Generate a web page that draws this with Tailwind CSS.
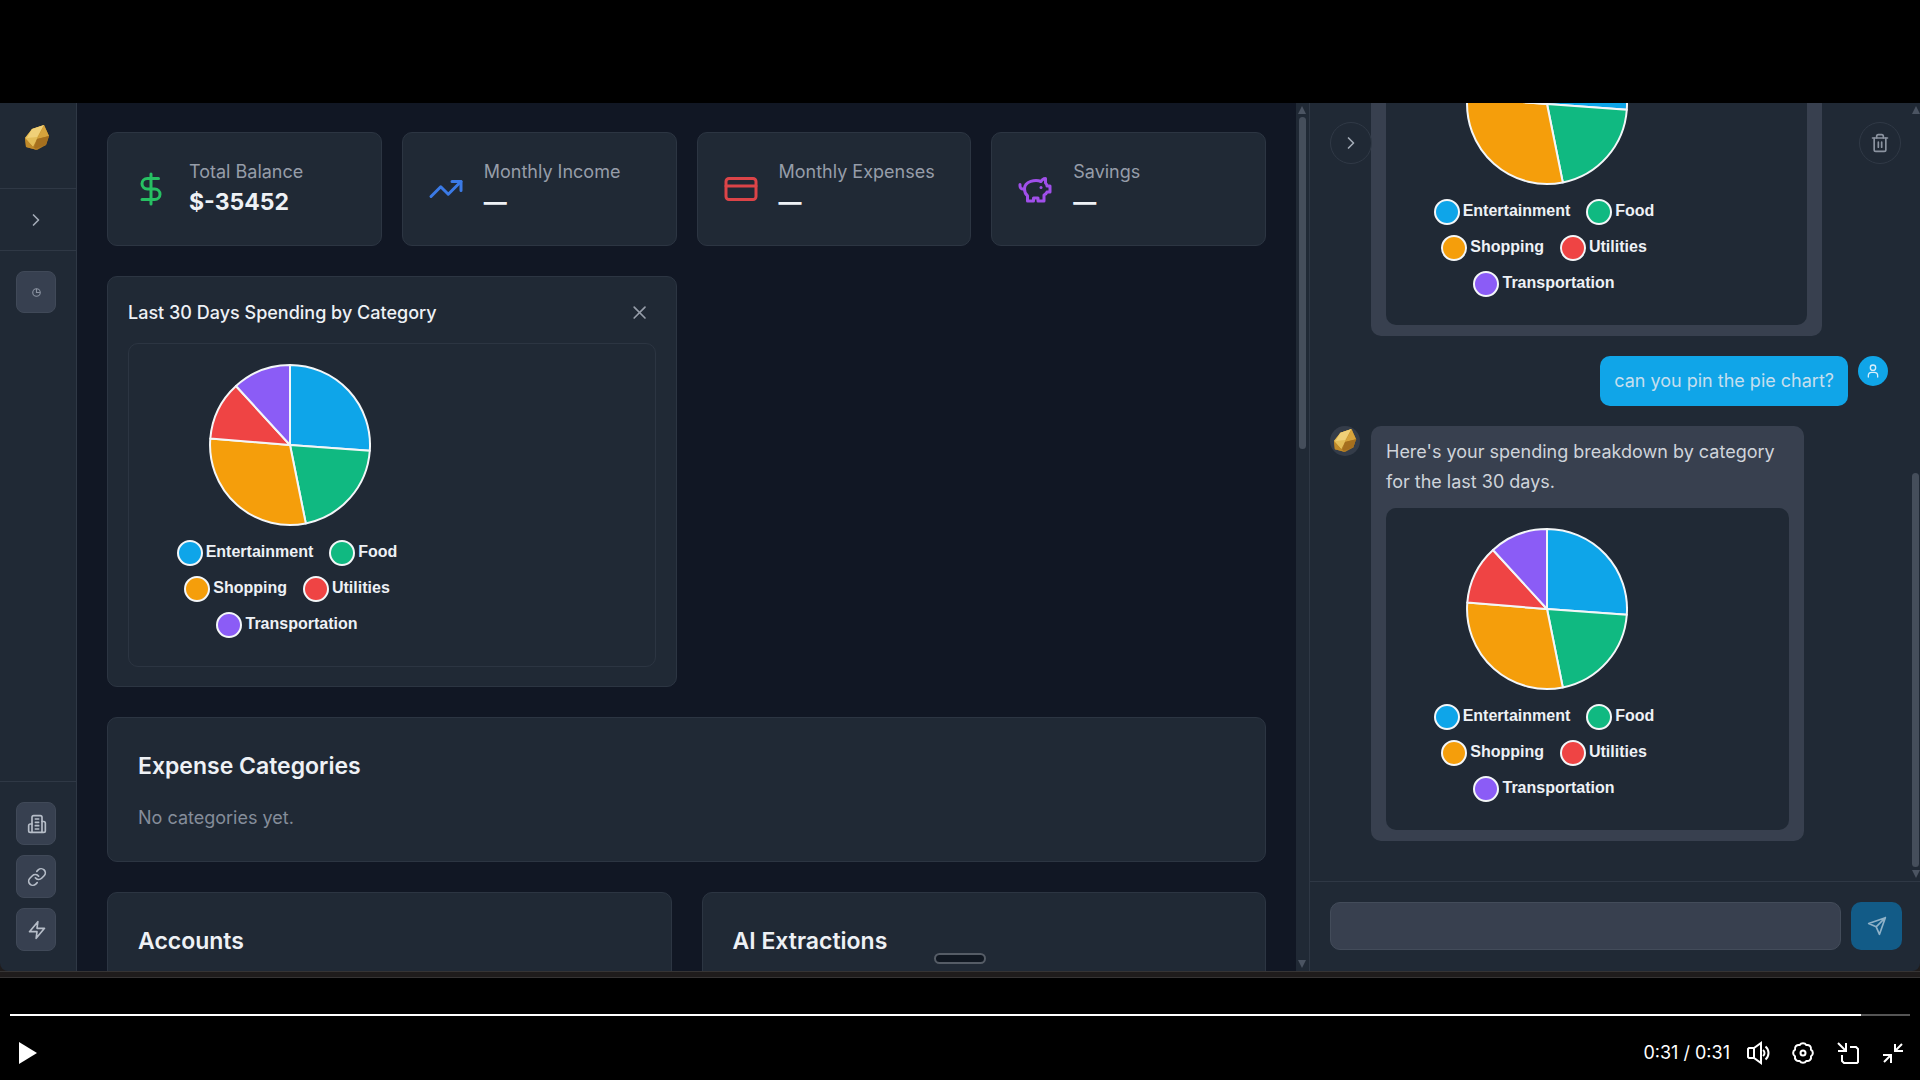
<!DOCTYPE html>
<html lang="en">
  <head>
    <meta charset="UTF-8" />
    <meta name="viewport" content="width=device-width, initial-scale=1.0" />
    <title>Finance dashboard demo</title>
    <script src="https://cdn.jsdelivr.net/npm/@tailwindcss/browser@4"></script>
  </head>
  <body
    class="bg-black h-screen flex flex-col overflow-hidden pt-[103px] font-['Inter',sans-serif] text-lg text-[#eef1f5]"
  >
    <!-- Shared icons -->
    <svg class="hidden">
      <symbol id="nugget" viewBox="0 0 26 26">
        <polygon points="1,13 8,4 20,0 25,11 22,20 13,25 2,22" fill="#b07a22" />
        <polygon points="1,13 8,4 20,0 13,14 9,22" fill="#e3bd58" />
        <polygon points="8,4 20,0 13,12 3,13" fill="#f0d078" />
        <polygon points="20,0 25,11 13,14" fill="#d6a33c" />
        <polygon points="13,14 25,11 22,20 10,24" fill="#a56f1e" />
        <polygon points="1,13 9,22 13,25 2,22" fill="#c08a2a" />
      </symbol>
    </svg>

    <div class="relative flex-1 min-h-0 flex bg-[#1f1c1c]">
      <!-- Sidebar -->
      <aside
        class="w-[77px] shrink-0 bg-[#202935] border-r border-[#2f3845] flex flex-col rounded-bl-lg"
      >
        <div class="h-[86px] border-b border-[#2f3845] pl-6 pt-[22px]">
          <svg class="w-[26px] h-[26px]"><use href="#nugget" /></svg>
        </div>
        <div class="h-[62px] border-b border-[#2f3845] pl-[26px] flex items-center">
          <button type="button" aria-label="Expand sidebar" class="text-[#a3abb7]">
            <svg class="w-5 h-5" viewBox="0 0 24 24" fill="none" stroke="currentColor" stroke-width="2" stroke-linecap="round" stroke-linejoin="round"><path d="m9 18 6-6-6-6" /></svg>
          </button>
        </div>
        <div class="flex-1 pl-4 pt-5">
          <button
            type="button"
            aria-label="Charts"
            class="w-10 h-[42px] rounded-lg bg-[#374050] border border-[#404958] flex items-center justify-center text-[#8b93a1]"
          >
            <svg class="w-[9px] h-[9px]" viewBox="0 0 24 24" fill="none" stroke="currentColor" stroke-width="3"><circle cx="12" cy="12" r="10" /><path d="M12 2v10h9" /></svg>
          </button>
        </div>
        <div class="border-t border-[#2f3845] pl-4 pt-5 pb-5 flex flex-col gap-[10px] text-[#b6bdc8]">
          <button type="button" aria-label="Institutions" class="w-10 h-[43px] rounded-lg bg-[#374050] border border-[#404958] flex items-center justify-center pl-[2px]">
            <svg class="w-5 h-5" viewBox="0 0 24 24" fill="none" stroke="currentColor" stroke-width="2" stroke-linecap="round" stroke-linejoin="round"><path d="M6 22V4a2 2 0 0 1 2-2h8a2 2 0 0 1 2 2v18Z" /><path d="M6 12H4a2 2 0 0 0-2 2v6a2 2 0 0 0 2 2h2" /><path d="M18 9h2a2 2 0 0 1 2 2v9a2 2 0 0 1-2 2h-2" /><path d="M10 6h4M10 10h4M10 14h4M10 18h4" /></svg>
          </button>
          <button type="button" aria-label="Links" class="w-10 h-[43px] rounded-lg bg-[#374050] border border-[#404958] flex items-center justify-center pl-[2px]">
            <svg class="w-5 h-5" viewBox="0 0 24 24" fill="none" stroke="currentColor" stroke-width="2" stroke-linecap="round" stroke-linejoin="round"><path d="M10 13a5 5 0 0 0 7.54.54l3-3a5 5 0 0 0-7.07-7.07l-1.72 1.71" /><path d="M14 11a5 5 0 0 0-7.54-.54l-3 3a5 5 0 0 0 7.07 7.07l1.71-1.71" /></svg>
          </button>
          <button type="button" aria-label="Automations" class="w-10 h-[43px] rounded-lg bg-[#374050] border border-[#404958] flex items-center justify-center pl-[2px]">
            <svg class="w-5 h-5" viewBox="0 0 24 24" fill="none" stroke="currentColor" stroke-width="2" stroke-linecap="round" stroke-linejoin="round"><polygon points="13 2 3 14 12 14 11 22 21 10 12 10 13 2" /></svg>
          </button>
        </div>
      </aside>

      <!-- Dashboard -->
      <main class="flex-1 min-w-0 overflow-hidden bg-[#111724] px-[30px] pt-[29px] flex flex-col gap-[30px]">
        <section class="grid grid-cols-4 gap-5 shrink-0">
          <div class="h-[114px] rounded-[10px] bg-[#202935] border border-[#2c3542] px-[25px] flex items-center gap-5">
            <svg class="w-9 h-9 shrink-0 text-[#27c063]" viewBox="0 0 24 24" fill="none" stroke="currentColor" stroke-width="2" stroke-linecap="round" stroke-linejoin="round"><path d="M12 2v20" /><path d="M17 5H9.500a3.500 3.500 0 0 0 0 7h5a3.500 3.500 0 0 1 0 7H6" /></svg>
            <div class="pb-[2px]">
              <p class="leading-7 text-[#969da9]">Total Balance</p>
              <p class="text-[23px] leading-8 font-bold">$-35452</p>
            </div>
          </div>
          <div class="h-[114px] rounded-[10px] bg-[#202935] border border-[#2c3542] px-[25px] flex items-center gap-5">
            <svg class="w-9 h-9 shrink-0 text-[#3b7ae6]" viewBox="0 0 24 24" fill="none" stroke="currentColor" stroke-width="2" stroke-linecap="round" stroke-linejoin="round"><path d="m22 7-8.500 8.500-5-5L2 17" /><path d="M16 7h6v6" /></svg>
            <div class="pb-[2px]">
              <p class="leading-7 text-[#969da9]">Monthly Income</p>
              <p class="text-[23px] leading-8 font-bold">—</p>
            </div>
          </div>
          <div class="h-[114px] rounded-[10px] bg-[#202935] border border-[#2c3542] px-[25px] flex items-center gap-5">
            <svg class="w-9 h-9 shrink-0 text-[#dc4448]" viewBox="0 0 24 24" fill="none" stroke="currentColor" stroke-width="2" stroke-linecap="round" stroke-linejoin="round"><rect width="20" height="14" x="2" y="5" rx="2" /><path d="M2 10h20" /></svg>
            <div class="pb-[2px]">
              <p class="leading-7 text-[#969da9]">Monthly Expenses</p>
              <p class="text-[23px] leading-8 font-bold">—</p>
            </div>
          </div>
          <div class="h-[114px] rounded-[10px] bg-[#202935] border border-[#2c3542] px-[25px] flex items-center gap-5">
            <svg class="w-9 h-9 shrink-0 text-[#a04fea]" viewBox="0 0 24 24" fill="none" stroke="currentColor" stroke-width="2" stroke-linecap="round" stroke-linejoin="round"><path d="M19 5c-1.500 0-2.800 1.400-3 2-3.500-1.500-11-.3-11 5 0 1.800 0 3 2 4.500V20h4v-2h3v2h4v-4c1-.5 1.700-1 2-2h2v-4h-2c0-1-.5-1.500-1-2V5z" /><path d="M2 9v1c0 1.100.9 2 2 2h1" /><path d="M16 11h.01" /></svg>
            <div class="pb-[2px]">
              <p class="leading-7 text-[#969da9]">Savings</p>
              <p class="text-[23px] leading-8 font-bold">—</p>
            </div>
          </div>
        </section>

        <section class="grid grid-cols-2 gap-5 shrink-0">
          <div class="rounded-[10px] bg-[#202935] border border-[#2c3542] px-5 pt-5 pb-[19px]">
            <div class="flex items-center justify-between h-8 mb-[14px]">
              <h3 class="font-medium">Last 30 Days Spending by Category</h3>
              <button type="button" aria-label="Unpin chart" class="pr-[6px] text-[#969da9]">
                <svg class="w-5 h-5" viewBox="0 0 24 24" fill="none" stroke="currentColor" stroke-width="2" stroke-linecap="round"><path d="M18 5 5 18M5 5l13 13" /></svg>
              </button>
            </div>
            <div data-chart class="rounded-[10px] border border-[#2c3542]"></div>
          </div>
        </section>

        <section class="shrink-0 rounded-[10px] bg-[#202935] border border-[#2c3542] p-[30px]">
          <h2 class="text-[23px] leading-9 font-semibold">Expense Categories</h2>
          <p class="mt-5 leading-[27px] text-[#858d9a]">No categories yet.</p>
        </section>

        <section class="grid grid-cols-2 gap-[30px] shrink-0">
          <div class="h-[200px] rounded-[10px] bg-[#202935] border border-[#2c3542] p-[30px]">
            <h2 class="text-[23px] leading-9 font-semibold">Accounts</h2>
          </div>
          <div class="h-[200px] rounded-[10px] bg-[#202935] border border-[#2c3542] p-[30px]">
            <h2 class="text-[23px] leading-9 font-semibold">AI Extractions</h2>
          </div>
        </section>
      </main>

      <!-- Dashboard scrollbar -->
      <div class="w-[13px] shrink-0 bg-[#202935] flex flex-col items-center py-[3px] pr-px text-[#4b5462]">
        <svg class="w-2 h-2 shrink-0" viewBox="0 0 8 8" fill="currentColor"><path d="M4 0 8 8H0z" /></svg>
        <div class="mt-[3px] w-[7px] h-[38.5%] rounded-full bg-[#454e5b]"></div>
        <svg class="mt-auto w-2 h-2 shrink-0" viewBox="0 0 8 8" fill="currentColor"><path d="M0 0h8L4 8z" /></svg>
      </div>

      <!-- Chat -->
      <aside class="relative w-[611px] shrink-0 bg-[#202935] border-l border-[#2f3845] flex flex-col rounded-br-lg">
        <div class="flex-1 min-h-0 flex">
          <div class="flex-1 min-w-0 overflow-hidden flex flex-col justify-end gap-5 pl-5 pr-[23px] pb-10">
            <div class="shrink-0 flex gap-[11px] pr-[66px]">
              <div class="w-[30px] shrink-0"></div>
              <div class="flex-1 rounded-[10px] bg-[#38404f] px-[15px] py-[11px]">
                <div data-chart class="rounded-[10px] bg-[#202935]"></div>
              </div>
            </div>

            <div class="shrink-0 flex justify-end gap-[10px]">
              <p class="rounded-[10px] bg-[#10a5e8] px-[14px] py-[10px] leading-[30px] text-[#c5dfee]">
                can you pin the pie chart?
              </p>
              <div class="w-[30px] h-[30px] shrink-0 rounded-full bg-[#10a5e8] flex items-center justify-center text-[#d8eefa]">
                <svg class="w-4 h-4" viewBox="0 0 24 24" fill="none" stroke="currentColor" stroke-width="2" stroke-linecap="round"><circle cx="12" cy="7" r="4" /><path d="M5 21v-2a5 5 0 0 1 5-5h4a5 5 0 0 1 5 5v2" /></svg>
              </div>
            </div>

            <div class="shrink-0 flex gap-[11px] pr-[84px]">
              <div class="w-[30px] h-[30px] shrink-0 rounded-full bg-[#343c49] flex items-center justify-center">
                <svg class="w-6 h-6"><use href="#nugget" /></svg>
              </div>
              <div class="flex-1 rounded-[10px] bg-[#38404f] px-[15px] py-[11px]">
                <p class="leading-[30px] text-[#cfd4db] mb-[11px]">
                  Here's your spending breakdown by category for the last 30 days.
                </p>
                <div data-chart class="rounded-[10px] bg-[#202935]"></div>
              </div>
            </div>
          </div>

          <!-- Chat scrollbar -->
          <div class="w-[9px] shrink-0 flex flex-col items-center py-[3px] text-[#4b5462]">
            <svg class="w-2 h-2 shrink-0" viewBox="0 0 8 8" fill="currentColor"><path d="M4 0 8 8H0z" /></svg>
            <div class="mt-auto mb-[3px] w-[7px] h-[51%] rounded-full bg-[#454e5b]"></div>
            <svg class="w-2 h-2 shrink-0" viewBox="0 0 8 8" fill="currentColor"><path d="M0 0h8L4 8z" /></svg>
          </div>
        </div>

        <form class="h-[90px] shrink-0 border-t border-[#2f3845] pl-5 pr-[18px] pt-5 flex gap-[10px]">
          <input
            type="text"
            aria-label="Message"
            class="flex-1 min-w-0 h-12 rounded-[10px] bg-[#38404f] border border-[#434c5a] px-4 focus:outline-none"
          />
          <button type="submit" aria-label="Send" class="w-[51px] h-12 rounded-[10px] bg-[#125b87] flex items-center justify-center text-[#8fb2c8]">
            <svg class="w-5 h-5" viewBox="0 0 24 24" fill="none" stroke="currentColor" stroke-width="2" stroke-linecap="round" stroke-linejoin="round"><path d="M22 2 15 22l-4-9-9-4ZM22 2 11 13" /></svg>
          </button>
        </form>

        <button type="button" aria-label="Collapse chat" class="absolute top-[19px] left-5 w-[42px] h-[42px] rounded-full bg-[#202935] border border-[#303946] flex items-center justify-center text-[#a3abb7]">
          <svg class="w-5 h-5" viewBox="0 0 24 24" fill="none" stroke="currentColor" stroke-width="2" stroke-linecap="round" stroke-linejoin="round"><path d="m9 18 6-6-6-6" /></svg>
        </button>
        <button type="button" aria-label="Clear chat" class="absolute top-[19px] right-[19px] w-[42px] h-[42px] rounded-full bg-[#202935] border border-[#303946] flex items-center justify-center text-[#8b93a0]">
          <svg class="w-5 h-5" viewBox="0 0 24 24" fill="none" stroke="currentColor" stroke-width="2" stroke-linecap="round" stroke-linejoin="round"><path d="M3 6h18" /><path d="M19 6v14a2 2 0 0 1-2 2H7a2 2 0 0 1-2-2V6" /><path d="M8 6V4a2 2 0 0 1 2-2h4a2 2 0 0 1 2 2v2" /><path d="M10 11v6M14 11v6" /></svg>
        </button>
      </aside>

      <div class="absolute bottom-[7px] left-1/2 -translate-x-1/2 w-[52px] h-[11px] rounded-full bg-[#101721] border-2 border-[#555c66]"></div>
    </div>

    <!-- Edge of the recorded window -->
    <div class="h-[7px] shrink-0 bg-[#1f1c1c] border-y border-[#363434]"></div>

    <!-- Player controls -->
    <footer class="h-[102px] shrink-0 bg-black text-white px-[10px] pt-9 flex flex-col">
      <input
        type="range"
        min="0"
        max="100"
        value="97"
        aria-label="Seek"
        class="block appearance-none w-full h-[2px] bg-[linear-gradient(to_right,#fff_97.4%,#555_97.4%)] [&::-webkit-slider-thumb]:appearance-none [&::-webkit-slider-thumb]:w-0"
      />
      <div class="mt-4 h-[42px] flex items-center">
        <button type="button" aria-label="Play" class="ml-[9px]">
          <svg class="w-[18px] h-[22px]" viewBox="0 0 18 22" fill="currentColor"><path d="M0 0 18 11 0 22z" /></svg>
        </button>
        <span class="ml-auto mr-4">0:31 / 0:31</span>
        <div class="flex items-center gap-[21px] pr-[5px]">
          <button type="button" aria-label="Mute">
            <svg class="w-6 h-6" viewBox="0 0 24 24" fill="none" stroke="currentColor" stroke-width="2"><path d="M15 2v20l-7-5H3l-1-1V8l1-1h5zM8 7v10" /><path d="M17 9c2 1.500 2 4.500 0 6M19.500 5.500c4 3.500 4 9.500 0 13" /></svg>
          </button>
          <button type="button" aria-label="Settings">
            <svg class="w-6 h-6" viewBox="0 0 24 24" fill="none" stroke="currentColor" stroke-width="2" stroke-linejoin="round"><path d="M19.950 8.710A3.800 3.800 0 0 1 19.950 15.290A3.800 3.800 0 0 1 15.290 19.950A3.800 3.800 0 0 1 8.710 19.950A3.800 3.800 0 0 1 4.050 15.290A3.800 3.800 0 0 1 4.050 8.710A3.800 3.800 0 0 1 8.710 4.050A3.800 3.800 0 0 1 15.290 4.050A3.800 3.800 0 0 1 19.950 8.710Z" /><circle cx="12" cy="12" r="2.500" /></svg>
          </button>
          <button type="button" aria-label="Picture in picture">
            <svg class="w-6 h-6" viewBox="0 0 24 24" fill="none" stroke="currentColor" stroke-width="2"><path d="m2 2 8 8M10 2v8H2" /><path d="M14 6h6l2 2v13l-1 1H8l-2-2v-6" /></svg>
          </button>
          <button type="button" aria-label="Exit full screen">
            <svg class="w-6 h-6" viewBox="0 0 24 24" fill="none" stroke="currentColor" stroke-width="2"><path d="m21 3-7 7M14 3v7h8M3 21l7-7M10 22v-8H2" /></svg>
          </button>
        </div>
      </div>
    </footer>

    <!-- Spending pie with its legend -->
    <template id="spendingChart">
      <div class="w-[280px] ml-[21px] pt-5 pb-7 font-['Liberation_Sans',sans-serif] text-base font-bold">
        <svg class="block mx-auto w-[162px] h-[162px]" viewBox="-81 -81 162 162" stroke="#f3f6f8" stroke-width="2" stroke-linejoin="round">
          <path fill="#0ea5e9" d="M0 0V-80A80 80 0 0 1 79.800 5.700Z" />
          <path fill="#10b981" d="M0 0L79.800 5.700A80 80 0 0 1 15.800 78.400Z" />
          <path fill="#f59e0b" d="M0 0L15.800 78.400A80 80 0 0 1 -79.700 -6.400Z" />
          <path fill="#ef4444" d="M0 0L-79.700 -6.400A80 80 0 0 1 -54 -59Z" />
          <path fill="#8b5cf6" d="M0 0L-54 -59A80 80 0 0 1 0 -80Z" />
        </svg>
        <ul class="mt-[14px] pr-[6px] flex flex-wrap justify-center gap-x-4 gap-y-[10px] leading-6">
          <li class="flex gap-[3px]"><span class="w-[26px] h-[26px] rounded-full border-2 border-[#f3f6f8] bg-[#0ea5e9]"></span>Entertainment</li>
          <li class="flex gap-[3px]"><span class="w-[26px] h-[26px] rounded-full border-2 border-[#f3f6f8] bg-[#10b981]"></span>Food</li>
          <li class="flex gap-[3px]"><span class="w-[26px] h-[26px] rounded-full border-2 border-[#f3f6f8] bg-[#f59e0b]"></span>Shopping</li>
          <li class="flex gap-[3px]"><span class="w-[26px] h-[26px] rounded-full border-2 border-[#f3f6f8] bg-[#ef4444]"></span>Utilities</li>
          <li class="flex gap-[3px]"><span class="w-[26px] h-[26px] rounded-full border-2 border-[#f3f6f8] bg-[#8b5cf6]"></span>Transportation</li>
        </ul>
      </div>
    </template>

    <script>
      const chart = document.getElementById("spendingChart");

      document.querySelectorAll("[data-chart]").forEach((box) => {
        box.appendChild(chart.content.cloneNode(true));
      });
    </script>
  </body>
</html>
